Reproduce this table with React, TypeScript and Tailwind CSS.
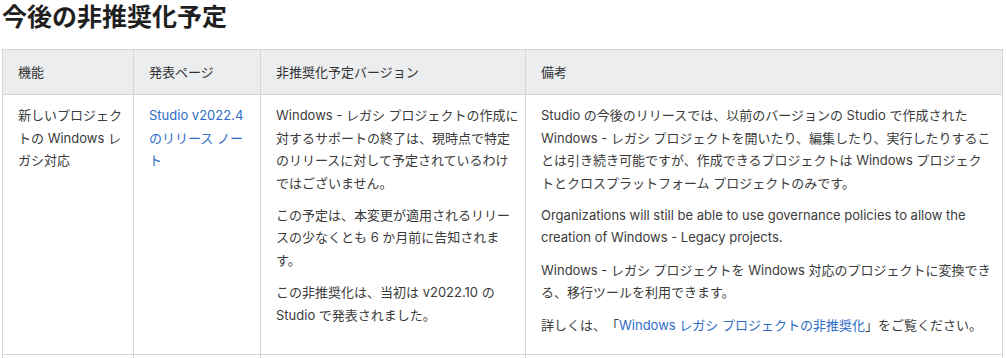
import React from "react";

const font = { fontFamily: '"Inter", "Noto Sans CJK JP", sans-serif' };

export default function App() {
  const th = "border border-[#d6d6d6] bg-[#ebedef] pl-[15px] pr-[10px] py-[11px] text-left font-normal text-[13px] leading-[22.4px] text-[#333]";
  const td = "border border-[#d6d6d6] pl-[15px] pt-[9px] pb-[8px] align-top text-[13px] leading-[22.4px] text-[#3b3b3b]";
  const p = "mb-[10px]";
  const link = "text-[#2d6cc8]";
  return (
    <div className="w-[1006px] h-[358px] overflow-hidden bg-white pl-[2px] [text-spacing-trim:space-all]" style={font}>
      <h2 className="text-[25px] font-bold leading-[34px] text-[#1f1f1f]">今後の非推奨化予定</h2>
      <table className="mt-[15px] border-collapse table-fixed w-[1000px]">
        <colgroup>
          <col className="w-[131px]" />
          <col className="w-[127px]" />
          <col className="w-[265px]" />
          <col className="w-[477px]" />
        </colgroup>
        <thead>
          <tr>
            <th className={th}>機能</th>
            <th className={th}>発表ページ</th>
            <th className={th}>非推奨化予定バージョン</th>
            <th className={th}>備考</th>
          </tr>
        </thead>
        <tbody>
          <tr>
            <td className={td + " pr-[10px]"}>
              <p className={p}>新しいプロジェクトの Windows レガシ対応</p>
            </td>
            <td className={td + " pr-[10px]"}>
              <p className={p}>
                <a className={link}>Studio v2022.4 のリリース ノート</a>
              </p>
            </td>
            <td className={td + " pr-[5px]"}>
              <p className={p}>Windows - レガシ プロジェクトの作成に対するサポートの終了は、現時点で特定のリリースに対して予定されているわけではございません。</p>
              <p className={p}>この予定は、本変更が適用されるリリースの少なくとも 6 か月前に告知されます。</p>
              <p className={p}>この非推奨化は、当初は v2022.10 の Studio で発表されました。</p>
            </td>
            <td className={td + " pr-[10px]"}>
              <p className={p}>Studio の今後のリリースでは、以前のバージョンの Studio で作成された Windows - レガシ プロジェクトを開いたり、編集したり、実行したりすることは引き続き可能ですが、作成できるプロジェクトは Windows プロジェクトとクロスプラットフォーム プロジェクトのみです。</p>
              <p className={p}>Organizations will still be able to use governance policies to allow the creation of Windows - Legacy projects.</p>
              <p className={p}>Windows - レガシ プロジェクトを Windows 対応のプロジェクトに変換できる、移行ツールを利用できます。</p>
              <p className={p}>
                詳しくは、「<a className={link}>Windows レガシ プロジェクトの非推奨化</a>」をご覧ください。
              </p>
            </td>
          </tr>
          <tr>
            <td className={td + " h-[40px] pr-[10px]"}></td>
            <td className={td}></td>
            <td className={td}></td>
            <td className={td}></td>
          </tr>
        </tbody>
      </table>
    </div>
  );
}
